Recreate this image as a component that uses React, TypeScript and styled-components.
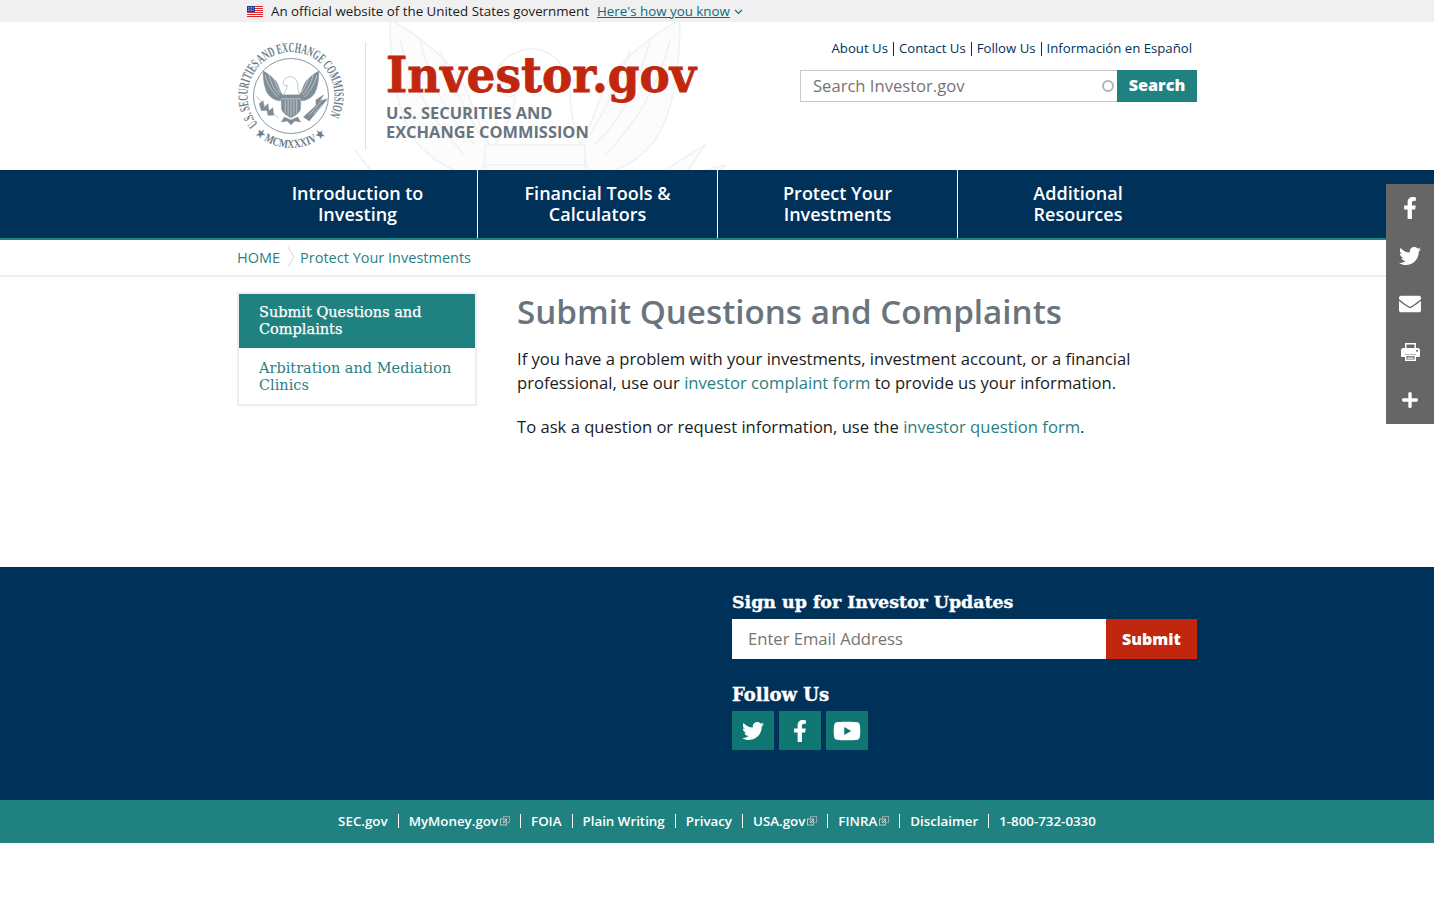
import React from "react";
import styled, { createGlobalStyle } from "styled-components";
import { FaFacebookF, FaTwitter, FaEnvelope, FaPlus, FaYoutube } from "react-icons/fa";

const NAVY = "#003159";
const TEAL = "#208280";
const RED = "#c1270e";
const SLAB = `"DejaVu Serif", "Liberation Serif", serif`;

const GlobalStyle = createGlobalStyle`
  html, body { margin: 0; padding: 0; background: #fff; }
  body { font-family: "Open Sans", "Liberation Sans", sans-serif; color: #1b1b1b; }
  * { box-sizing: border-box; }
  a { text-decoration: none; color: inherit; }
`;

const Page = styled.div`
  position: relative;
  min-height: 918px;
  overflow: hidden;
`;

const Container = styled.div`
  width: 960px;
  margin-left: 237px;
`;

const GovBanner = styled.div`
  height: 22px;
  background: #f0f0f0;
  font-size: 13.33px;
`;

const GovInner = styled(Container)`
  display: flex;
  align-items: center;
  height: 22px;
  padding-left: 10px;
`;

const GovLink = styled.a`
  color: #0b6a80;
  text-decoration: underline;
  margin-left: 8px;
`;

const Chevron = styled.svg`
  margin-left: 4px;
  margin-top: 2px;
`;

const Header = styled(Container)`
  position: relative;
  height: 148px;
  display: flex;
  justify-content: space-between;
`;

const Watermark = styled.svg`
  position: absolute;
  left: 100px;
  top: 0;
`;

const Brand = styled.div`
  position: relative;
  display: flex;
  padding-top: 20px;
`;

const Divider = styled.div`
  width: 1px;
  height: 108px;
  background: #dcdfe1;
  margin: 0 20px;
`;

const Wordmark = styled.div`
  font-family: ${SLAB};
  font-weight: 700;
  font-size: 48px;
  line-height: 54px;
  color: ${RED};
  margin-top: 6px;
  white-space: nowrap;
  transform: scaleX(0.945);
  transform-origin: left center;
  -webkit-text-stroke: 0.8px ${RED};
`;

const Agency = styled.div`
  font-size: 16.4px;
  line-height: 19px;
  font-weight: 700;
  color: #68757f;
  margin-top: 1px;
`;

const Tools = styled.div`
  position: relative;
  width: 397px;
  padding-top: 18px;
`;

const TopLinks = styled.div`
  display: flex;
  justify-content: flex-end;
  padding-right: 5px;
  font-size: 13.2px;
  line-height: 13px;
  height: 14px;
  margin-top: 2px;
  margin-bottom: -1px;
  color: ${NAVY};
`;

const TopLink = styled.a<{ $first?: boolean }>`
  padding-left: ${(p) => (p.$first ? 0 : 5)}px;
  margin-left: ${(p) => (p.$first ? 0 : 5)}px;
  border-left: ${(p) => (p.$first ? "none" : `1px solid ${NAVY}`)};
`;

const SearchRow = styled.div`
  display: flex;
  height: 32px;
  margin-top: 15px;
`;

const SearchBox = styled.div`
  flex: 1;
  border: 1px solid #c8c8c8;
  border-right: none;
  padding: 0 3px 2px 12px;
  display: flex;
  align-items: center;
  justify-content: space-between;
  font-size: 16.6px;
  color: #757575;
`;

const Spinner = styled.span`
  width: 12px;
  height: 12px;
  margin-top: 2px;
  border: 2px solid #b4b4b4;
  border-radius: 50%;
`;

const SearchButton = styled.button`
  width: 80px;
  border: none;
  background: ${TEAL};
  color: #fff;
  font-family: inherit;
  font-weight: 800;
  font-size: 16.2px;
  padding: 0 0 2px;
`;

const Nav = styled.nav`
  background: ${NAVY};
  height: 70px;
  border-bottom: 2px solid ${TEAL};
`;

const NavRow = styled(Container)`
  display: flex;
  height: 68px;
  padding-left: 1px;
`;

const NavItem = styled.a<{ $last?: boolean }>`
  flex: 0 0 240px;
  padding: 0 40px;
  display: flex;
  align-items: center;
  justify-content: center;
  text-align: center;
  color: #fff;
  font-size: 18px;
  line-height: 21px;
  font-weight: 600;
  border-right: ${(p) => (p.$last ? "none" : "1px solid #fff")};
`;

const Crumbs = styled.div`
  height: 37px;
  border-bottom: 2px solid #eeeeee;
`;

const CrumbRow = styled(Container)`
  display: flex;
  align-items: center;
  height: 35px;
  padding-bottom: 1px;
  font-size: 14.5px;
  color: #2a7f84;
`;

const CrumbSep = styled.svg`
  margin: 0 5px 0 7px;
`;

const Content = styled(Container)`
  display: flex;
  height: 290px;
  padding-top: 15px;
`;

const SideMenu = styled.div`
  width: 240px;
  height: 114px;
  border: 2px solid #eeeeee;
  font-family: ${SLAB};
`;

const SideItem = styled.a<{ $active?: boolean }>`
  display: block;
  height: ${(p) => (p.$active ? 54 : 56)}px;
  padding: ${(p) => (p.$active ? 10 : 12)}px 20px 0;
  font-size: 14.5px;
  line-height: 17px;
  background: ${(p) => (p.$active ? TEAL : "#fff")};
  color: ${(p) => (p.$active ? "#fff" : "#2a7f84")};
  -webkit-text-stroke: ${(p) => (p.$active ? "0.25px #fff" : "0")};
`;

const Main = styled.main`
  margin-left: 40px;
  width: 680px;
`;

const Title = styled.h1`
  margin: 0;
  font-size: 33.2px;
  line-height: 40px;
  font-weight: 600;
  color: #6a747c;
`;

const Para = styled.p`
  margin: 0 0 20px;
  font-size: 16.63px;
  line-height: 24px;
  color: #1b1b1b;
  &:first-of-type { margin-top: 15px; }
`;

const TextLink = styled.a`
  color: #2a8080;
`;

const Footer = styled.footer`
  background: ${NAVY};
  height: 233px;
`;

const FooterInner = styled(Container)`
  padding: 24px 0 0 495px;
`;

const FooterHead = styled.h3<{ $size: number }>`
  margin: 0;
  font-family: ${SLAB};
  font-weight: 700;
  font-size: ${(p) => p.$size}px;
  line-height: 22px;
  color: #fff;
  -webkit-text-stroke: 0.4px #fff;
`;

const Signup = styled.div`
  display: flex;
  height: 40px;
  margin: 6px 0 25px;
`;

const EmailBox = styled.div`
  flex: 1;
  background: #fff;
  color: #757575;
  font-size: 16.6px;
  padding: 0 0 2px 16px;
  display: flex;
  align-items: center;
`;

const SubmitButton = styled.button`
  width: 91px;
  border: none;
  background: ${RED};
  color: #fff;
  font-family: inherit;
  font-weight: 800;
  font-size: 16px;
  padding: 0;
`;

const SocialRow = styled.div`
  display: flex;
  gap: 5px;
  margin-top: 5px;
`;

const SocialTile = styled.a<{ $size: number }>`
  width: 42px;
  height: 39px;
  background: #0f7672;
  color: #fff;
  display: flex;
  align-items: center;
  justify-content: center;
  font-size: ${(p) => p.$size}px;
`;

const BottomBar = styled.div`
  background: ${TEAL};
  height: 43px;
  padding-bottom: 2px;
  display: flex;
  align-items: center;
  justify-content: center;
`;

const BottomLink = styled.a<{ $first?: boolean }>`
  display: flex;
  align-items: center;
  height: 14px;
  color: #fff;
  font-size: 13.33px;
  font-weight: 600;
  padding-left: ${(p) => (p.$first ? 0 : 10)}px;
  margin-left: ${(p) => (p.$first ? 0 : 10)}px;
  border-left: ${(p) => (p.$first ? "none" : "1px solid #fff")};
`;

const ShareBar = styled.div`
  position: absolute;
  top: 184px;
  right: 0;
  width: 48px;
  height: 240px;
  background: #666666;
  display: flex;
  flex-direction: column;
`;

const ShareItem = styled.a`
  height: 48px;
  display: flex;
  align-items: center;
  justify-content: center;
  color: #fff;
  font-size: 22px;
`;

const Flag = () => (
  <svg width="16" height="11" viewBox="0 0 16 11" style={{ marginRight: 8 }}>
    <rect width="16" height="11" fill="#fff" />
    {[0, 2, 4, 6, 8, 10].map((y) => (
      <rect key={y} y={y} width="16" height="1" fill="#d8262c" />
    ))}
    <rect width="8" height="6" fill="#2a3c9a" />
    <path d="M1 1.5h6M1 3h6M1 4.5h6" stroke="#c9d0ee" strokeWidth="0.7" strokeDasharray="0.8 0.8" />
  </svg>
);

type EagleProps = { fill: string; line: string; edge: string; head: string; width: number };

// same drawing for the seal and the big faint one behind the logo
const Eagle = ({ fill, line, edge, head, width }: EagleProps) => (
  <g fill={fill} stroke={edge} strokeWidth={width} strokeLinejoin="round">
    {[1, -1].map((s) => (
      <g key={s} transform={`scale(${s} 1)`}>
        <path d="M-9-1C-12-6-13-12-16-16C-20-20-25-24-29-26C-29-18-28-8-24-2C-21 2-16 5-11 5Z" />
        <path
          d="M-27-22C-25-14-21-6-14 1M-23-22C-21-14-18-7-12-1M-19-20C-17-14-14-8-11-3"
          fill="none"
          stroke={line}
        />
      </g>
    ))}
    {/* olive branch */}
    <path d="M-36 0C-30 8-22 16-13 23" fill="none" />
    <path d="M-33 8L-29 5L-28 12L-24 8L-23 16L-19 12L-18 20L-24 20L-25 15L-31 15Z" />
    {/* arrows */}
    <path d="M13 22L19 26L38 3L30 5L34-1L26 4L26 10Z" />
    <path d="M19 20L31 6M23 19L33 9" fill="none" stroke={line} />
    {/* head */}
    <path d="M-8-14C-8-18-3-21 1-20C5-19 7-15 7-11C7-8 8-4 9-1H-8C-6-4-4-8-4-11C-6-10-8-12-8-14Z" fill={head} />
    {/* shield and tail */}
    <path d="M-7 22L-10 27L-4 26L0 30L4 26L10 27L7 22L0 25Z" />
    <path d="M-10-1H10V12C10 18 4 20 0 23C-4 20-10 18-10 12Z" />
    <path d="M-6 4V18M-3 4V20M0 4V22M3 4V20M6 4V18M-10 3H10" fill="none" stroke={line} />
  </g>
);

const sealText = {
  fontFamily: "'Liberation Serif', serif",
  fontWeight: 700,
  fill: "#6f7d87",
};

const Seal = () => (
  <svg width="108" height="108" viewBox="-54 -54 108 108">
    <defs>
      <path id="sealTop" d="M-33 28A43.5 43.5 0 1 1 36 24" />
      <path id="sealBottom" d="M-40 33A52 52 0 0 0 40 33" />
    </defs>
    <circle r="37.5" fill="none" stroke="#8a979f" strokeWidth="1" />
    <text {...sealText} fontSize="14">
      <textPath href="#sealTop" textLength="188" lengthAdjust="spacingAndGlyphs">
        U.S. SECURITIES AND EXCHANGE COMMISSION
      </textPath>
    </text>
    <text {...sealText} fontSize="12">
      <textPath href="#sealBottom" startOffset="6" textLength="78" lengthAdjust="spacingAndGlyphs">
        ★ MCMXXXIV ★
      </textPath>
    </text>
    <g transform="scale(0.96)">
      <Eagle fill="#7f8d96" line="#fff" edge="#7f8d96" head="#fff" width={0.5} />
    </g>
  </svg>
);

const Printer = () => (
  <svg width="19" height="18" viewBox="0 0 19 18" fill="#fff" fillRule="evenodd">
    <path d="M4 0H15V5H13.5V1.5H5.5V5H4Z" />
    <path d="M2 5H17C18 5 19 6 19 7V13C19 14 18 14 17 14H15V11H4V14H2C1 14 0 14 0 13V7C0 6 1 5 2 5ZM15 7V8.5H17V7Z" />
    <path d="M4 11.5H15V18H4ZM5.5 13V16.5H13.5V13ZM6.5 13.8H12.5V14.6H6.5ZM6.5 15.2H12.5V16H6.5Z" />
  </svg>
);

const Ext = () => (
  <svg width="10" height="10" viewBox="0 0 10 10" style={{ marginLeft: 2 }}>
    <rect x="0.5" y="3" width="6" height="6" fill="none" stroke="#b9c9c9" strokeWidth="1" />
    <rect x="3.5" y="0.5" width="6" height="6" fill="none" stroke="#8fa6a6" strokeWidth="1" />
    <path d="M3 7L7 3" stroke="#c9d6d6" strokeWidth="1" />
  </svg>
);

const navItems = ["Introduction to Investing", "Financial Tools & Calculators", "Protect Your Investments", "Additional Resources"];
const topLinks = ["About Us", "Contact Us", "Follow Us", "Información en Español"];
const bottomLinks: [string, boolean][] = [
  ["SEC.gov", false],
  ["MyMoney.gov", true],
  ["FOIA", false],
  ["Plain Writing", false],
  ["Privacy", false],
  ["USA.gov", true],
  ["FINRA", true],
  ["Disclaimer", false],
  ["1-800-732-0330", false],
];

const App = (): JSX.Element => {
  return (
    <Page>
      <GlobalStyle />
      <GovBanner>
        <GovInner>
          <Flag />
          An official website of the United States government
          <GovLink href="#">Here's how you know</GovLink>
          <Chevron width="9" height="6" viewBox="0 0 9 6">
            <path d="M1 1l3.5 3.5L8 1" fill="none" stroke="#0b6a80" strokeWidth="1.1" />
          </Chevron>
        </GovInner>
      </GovBanner>

      <Header>
        <Watermark width="420" height="148" viewBox="-39.6 -25.6 84 29.6">
          <Eagle fill="#fcfcfc" line="#eff1f2" edge="#eff1f2" head="#fff" width={0.3} />
        </Watermark>
        <Brand>
          <Seal />
          <Divider />
          <div>
            <Wordmark>Investor.gov</Wordmark>
            <Agency>
              U.S. SECURITIES AND
              <br />
              EXCHANGE COMMISSION
            </Agency>
          </div>
        </Brand>
        <Tools>
          <TopLinks>
            {topLinks.map((t, i) => (
              <TopLink key={t} href="#" $first={i === 0}>
                {t}
              </TopLink>
            ))}
          </TopLinks>
          <SearchRow>
            <SearchBox>
              Search Investor.gov
              <Spinner />
            </SearchBox>
            <SearchButton>Search</SearchButton>
          </SearchRow>
        </Tools>
      </Header>

      <Nav>
        <NavRow>
          {navItems.map((t, i) => (
            <NavItem key={t} href="#" $last={i === navItems.length - 1}>
              {t}
            </NavItem>
          ))}
        </NavRow>
      </Nav>

      <Crumbs>
        <CrumbRow>
          <a href="#">HOME</a>
          <CrumbSep width="8" height="22" viewBox="0 0 8 22">
            <path d="M1 1l6 10-6 10" fill="none" stroke="#dddddd" strokeWidth="1.2" />
          </CrumbSep>
          <a href="#">Protect Your Investments</a>
        </CrumbRow>
      </Crumbs>

      <Content>
        <SideMenu>
          <SideItem href="#" $active>
            Submit Questions and Complaints
          </SideItem>
          <SideItem href="#">Arbitration and Mediation Clinics</SideItem>
        </SideMenu>
        <Main>
          <Title>Submit Questions and Complaints</Title>
          <Para>
            If you have a problem with your investments, investment account, or a financial professional, use our{" "}
            <TextLink href="#">investor complaint form</TextLink> to provide us your information.
          </Para>
          <Para>
            To ask a question or request information, use the <TextLink href="#">investor question form</TextLink>.
          </Para>
        </Main>
      </Content>

      <Footer>
        <FooterInner>
          <FooterHead $size={17.4}>Sign up for Investor Updates</FooterHead>
          <Signup>
            <EmailBox>Enter Email Address</EmailBox>
            <SubmitButton>Submit</SubmitButton>
          </Signup>
          <FooterHead $size={18}>Follow Us</FooterHead>
          <SocialRow>
            <SocialTile href="#" $size={22}><FaTwitter /></SocialTile>
            <SocialTile href="#" $size={22}><FaFacebookF /></SocialTile>
            <SocialTile href="#" $size={28}><FaYoutube /></SocialTile>
          </SocialRow>
        </FooterInner>
      </Footer>

      <BottomBar>
        {bottomLinks.map(([t, ext], i) => (
          <BottomLink key={t} href="#" $first={i === 0}>
            {t}
            {ext && <Ext />}
          </BottomLink>
        ))}
      </BottomBar>

      <ShareBar>
        <ShareItem href="#"><FaFacebookF /></ShareItem>
        <ShareItem href="#"><FaTwitter /></ShareItem>
        <ShareItem href="#"><FaEnvelope /></ShareItem>
        <ShareItem href="#"><Printer /></ShareItem>
        <ShareItem href="#"><FaPlus size={18} /></ShareItem>
      </ShareBar>
    </Page>
  );
};

export default App;
